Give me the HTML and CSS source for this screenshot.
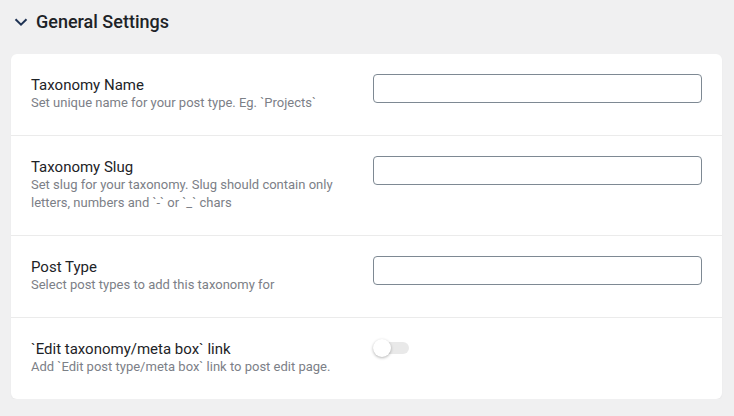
FILE: index.html
```html
<!DOCTYPE html>
<html lang="en">
<head>
    <meta charset="UTF-8">
    <meta name="viewport" content="width=device-width, initial-scale=1.0">
    <title>Taxonomy Settings</title>
    <link rel="stylesheet" href="styles.css">
</head>
<body>
    <div class="panel">
        <div class="panel-head">
            <svg class="chevron" width="14" height="8" viewBox="0 0 14 8">
                <polyline points="1.5,1.2 7,6.6 12.5,1.2" fill="none" stroke="#1f3354" stroke-width="2" />
            </svg>
            <span>General Settings</span>
        </div>

        <div class="card">
            <div class="row">
                <div class="info">
                    <div class="label">Taxonomy Name</div>
                    <div class="desc">Set unique name for your post type. Eg. `Projects`</div>
                </div>
                <div class="control">
                    <input type="text" class="text-input">
                </div>
            </div>

            <div class="row">
                <div class="info">
                    <div class="label">Taxonomy Slug</div>
                    <div class="desc">Set slug for your taxonomy. Slug should contain only letters, numbers and `-` or `_` chars</div>
                </div>
                <div class="control">
                    <input type="text" class="text-input">
                </div>
            </div>

            <div class="row">
                <div class="info">
                    <div class="label">Post Type</div>
                    <div class="desc">Select post types to add this taxonomy for</div>
                </div>
                <div class="control">
                    <input type="text" class="text-input">
                </div>
            </div>

            <div class="row">
                <div class="info">
                    <div class="label">`Edit taxonomy/meta box` link</div>
                    <div class="desc">Add `Edit post type/meta box` link to post edit page.</div>
                </div>
                <div class="control">
                    <span class="toggle"><span class="knob"></span></span>
                </div>
            </div>
        </div>
    </div>
</body>
</html>
```

FILE: styles.css
```css
body {
    margin: 0;
    background-color: #f0f0f1;
    font-family: Roboto, "Liberation Sans", sans-serif;
}
.panel {
    padding: 0 12px 0 11px;
}
.panel-head {
    display: flex;
    align-items: center;
    gap: 8px;
    padding: 11px 0 21px 3px;
    font-size: 18px;
    line-height: 22px;
    font-weight: 500;
    color: #1d2327;
}
.chevron {
    display: block;
}
.card {
    background-color: #fff;
    border-radius: 6px;
    box-shadow: 0 1px 2px rgba(0, 0, 0, 0.04);
}
.row {
    display: grid;
    grid-template-columns: 1fr 329px;
    gap: 20px;
    align-items: start;
    padding: 20px;
    border-bottom: 1px solid #ebebeb;
}
.row:last-child {
    border-bottom: none;
}
.info {
    padding-top: 2px;
    margin-bottom: 3px;
}
.label {
    font-size: 15px;
    line-height: 18px;
    color: #1d2327;
}
.desc {
    font-size: 13px;
    line-height: 18px;
    color: #7c8087;
}
.text-input {
    display: block;
    box-sizing: border-box;
    width: 100%;
    height: 29px;
    margin: 0;
    border: 1px solid #7e8993;
    border-radius: 4px;
    background-color: #fff;
}
.toggle {
    position: relative;
    display: block;
    width: 36px;
    height: 12px;
    margin-top: 4px;
    border-radius: 6px;
    background-color: #e9e9e9;
}
.knob {
    position: absolute;
    left: 0;
    top: -3px;
    width: 18px;
    height: 18px;
    border-radius: 50%;
    background-color: #fff;
    box-shadow: 0 1px 3px rgba(0, 0, 0, 0.3);
}
```
